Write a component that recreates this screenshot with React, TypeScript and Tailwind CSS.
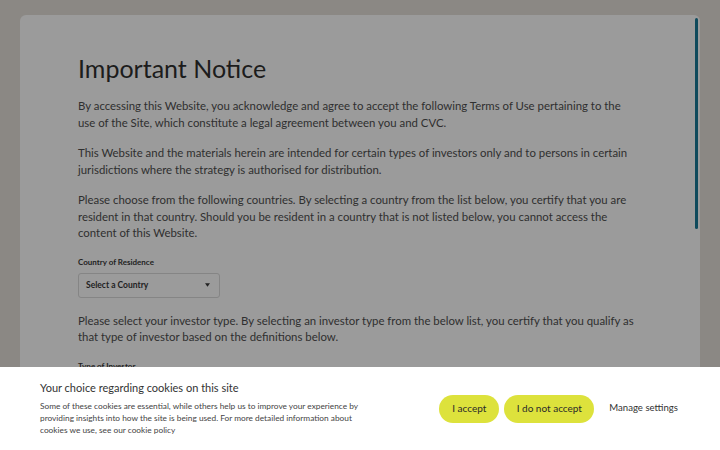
const paragraphs: string[][] = [
  [
    'By accessing this Website, you acknowledge and agree to accept the following Terms of Use pertaining to the',
    'use of the Site, which constitute a legal agreement between you and CVC.',
  ],
  [
    'This Website and the materials herein are intended for certain types of investors only and to persons in certain',
    'jurisdictions where the strategy is authorised for distribution.',
  ],
  [
    'Please choose from the following countries. By selecting a country from the list below, you certify that you are',
    'resident in that country. Should you be resident in a country that is not listed below, you cannot access the',
    'content of this Website.',
  ],
]

function Para({ lines }: { lines: string[] }) {
  return (
    <p className="text-[11.4px] leading-[16.5px] text-[#2f2f2f]">
      {lines.map((l) => (
        <span key={l} className="block whitespace-nowrap">
          {l}
        </span>
      ))}
    </p>
  )
}

export default function App() {
  return (
    <div
      className="relative h-[450px] w-[720px] overflow-hidden bg-[#8b8884] pt-[15px] pl-[20px] pr-[20px]"
      style={{ fontFamily: 'Lato, "Noto Sans", sans-serif' }}
    >
      <div className="relative h-full rounded-t-[6px] bg-[#9b9b9b] pl-[58px] pt-[38px]">
        <h1 className="text-[25px] leading-[30px] text-[#1c1c1c]">Important Notice</h1>

        <div className="mt-[15px] flex flex-col gap-[14px]">
          {paragraphs.map((p, i) => (
            <Para key={i} lines={p} />
          ))}
        </div>

        <div className="mt-[15px] text-[8px] font-bold leading-[10px] text-[#222]">Country of Residence</div>
        <div className="mt-[6px] flex h-[25px] w-[142px] items-center justify-between rounded-[3px] border border-[#858585] pl-[7px] pr-[9px]">
          <span className="text-[8.5px] font-bold text-[#222]">Select a Country</span>
          <svg width="5" height="4" viewBox="0 0 6 4" className="text-[#222]">
            <path d="M0 0h6L3 4z" fill="currentColor" />
          </svg>
        </div>

        <div className="mt-[15px]">
          <Para
            lines={[
              'Please select your investor type. By selecting an investor type from the below list, you certify that you qualify as',
              'that type of investor based on the definitions below.',
            ]}
          />
        </div>

        <div className="mt-[15px] text-[8px] font-bold leading-[10px] text-[#222]">Type of Investor</div>

        <div className="absolute right-[2px] top-[3px] h-[211px] w-[3px] rounded-full bg-[#0f4a5c]" />
      </div>

      <div className="absolute bottom-0 left-0 right-0 flex h-[83px] items-center bg-white pl-[40px] pr-[42px]">
        <div className="w-[340px] self-start pt-[14px]">
          <div className="text-[11px] leading-[14px] text-[#333]">Your choice regarding cookies on this site</div>
          <p className="mt-[5px] text-[8.3px] leading-[12px] text-[#444]">
            <span className="block whitespace-nowrap">
              Some of these cookies are essential, while others help us to improve your experience by
            </span>
            <span className="block whitespace-nowrap">
              providing insights into how the site is being used. For more detailed information about
            </span>
            <span className="block whitespace-nowrap">cookies we use, see our cookie policy</span>
          </p>
        </div>
        <div className="ml-auto flex items-center gap-[5px]">
          <button className="h-[28px] w-[60px] rounded-full bg-[#dde23c] text-[10px] text-[#2a2a2a]">I accept</button>
          <button className="h-[28px] w-[90px] rounded-full bg-[#dde23c] text-[10px] text-[#2a2a2a]">
            I do not accept
          </button>
          <button className="ml-[10px] text-[9.6px] text-[#333]">Manage settings</button>
        </div>
      </div>
    </div>
  )
}
